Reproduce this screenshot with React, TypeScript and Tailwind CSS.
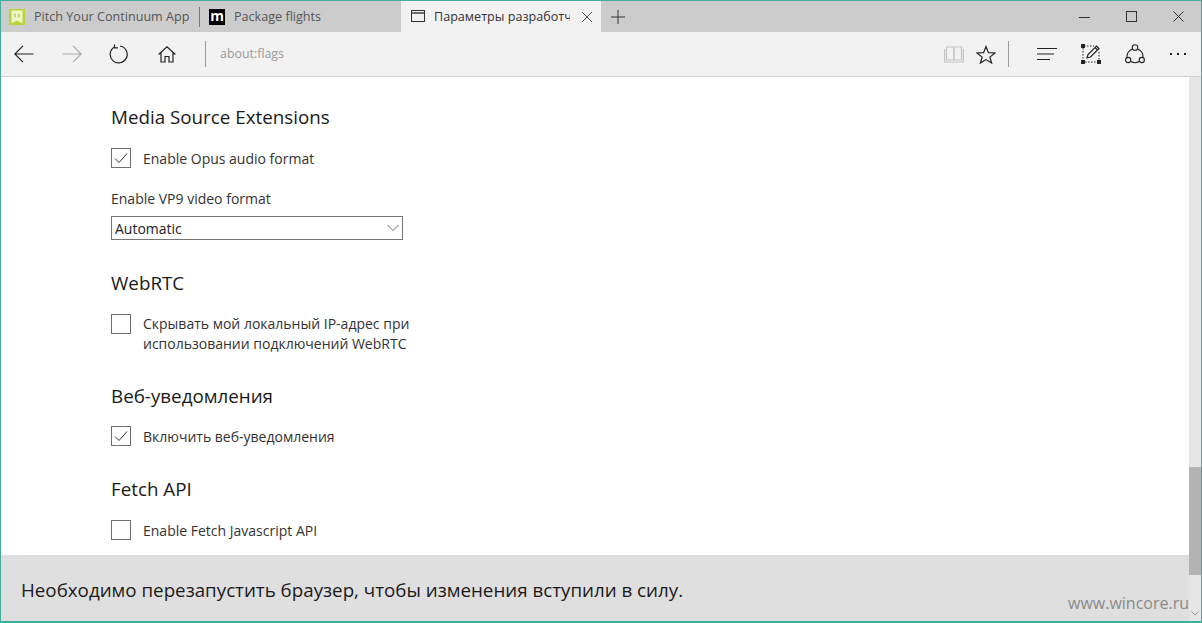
import React from 'react';

const font = { fontFamily: '"Open Sans", "Noto Sans", sans-serif' };

function Check({ checked }: { checked?: boolean }) {
  return (
    <span className="w-5 h-5 border border-[#6e6e6e] shrink-0 bg-white flex items-center justify-center">
      {checked && (
        <svg width="18" height="18" viewBox="0 0 18 18" fill="none" stroke="#333" strokeWidth="1">
          <path d="M3 9.5 L7 13.5 L15 4.5" />
        </svg>
      )}
    </span>
  );
}

function Heading({ children, className }: { children: React.ReactNode; className?: string }) {
  return <h2 className={`text-[18.8px] leading-[24px] text-[#1a1a1a] ${className}`}>{children}</h2>;
}

function Tab({ icon, label, w }: { icon: React.ReactNode; label: string; w: string }) {
  return (
    <div className={`h-full flex items-center pl-[8px] overflow-hidden ${w}`}>
      {icon}
      <span className="ml-[9px] mt-[2px] text-[12.6px] text-[#555] whitespace-nowrap">{label}</span>
    </div>
  );
}

function BackIcon({ color }: { color: string }) {
  return (
    <svg width="20" height="18" viewBox="0 0 20 18" fill="none" stroke={color} strokeWidth="1.2">
      <path d="M0.5 9 H19.5 M9 0.8 L0.8 9 L9 17.2" />
    </svg>
  );
}

export default function App() {
  return (
    <div style={font} className="w-[1202px] h-[623px] overflow-hidden border border-[#3fae9c] border-b-2 flex flex-col bg-white">
      {/* title bar */}
      <div className="h-[31px] bg-[#cccccc] flex items-stretch shrink-0">
        <Tab
          w="w-[191px]"
          label="Pitch Your Continuum App to"
          icon={
            <svg width="16" height="16" viewBox="0 0 16 16" className="shrink-0">
              <rect width="16" height="16" fill="#b9d533" />
              <path d="M2.5 1.5 H13.5 V14.5 L8 11.5 L2.5 14.5 Z" fill="#eef5c8" />
              <path d="M6.5 5 H6 V8 H6.5 M9.5 5 H10 V8 H9.5" stroke="#9ab82a" fill="none" />
            </svg>
          }
        />
        <div className="w-px h-[20px] mt-[6px] ml-[7px] bg-[#777] shrink-0" />
        <Tab
          w="w-[201px]"
          label="Package flights"
          icon={
            <span className="ml-px w-[16px] h-[16px] bg-black text-white text-[14px] leading-[14px] font-bold flex justify-center shrink-0">m</span>
          }
        />
        <div className="w-[200px] h-full bg-[#f2f2f2] flex items-center pl-[10px] shrink-0">
          <svg width="15" height="13" viewBox="0 0 15 13" fill="none" stroke="#333" className="shrink-0">
            <rect x="0.5" y="0.5" width="13" height="11" />
            <path d="M0.5 3 H13.5" strokeWidth="1.4" />
          </svg>
          <span className="ml-[8px] w-[136px] h-[18px] leading-[18px] text-[12.6px] text-[#333] whitespace-nowrap overflow-hidden shrink-0 block">Параметры разработчика</span>
          <svg width="12" height="12" viewBox="0 0 12 12" fill="none" stroke="#555" className="ml-[11px] shrink-0">
            <path d="M1 1 L11 11 M11 1 L1 11" />
          </svg>
        </div>
        <div className="ml-[10px] flex items-center">
          <svg width="14" height="14" viewBox="0 0 14 14" fill="none" stroke="#333">
            <path d="M7 0 V14 M0 7 H14" />
          </svg>
        </div>
        <div className="ml-auto flex items-center gap-[36px] pr-[17px]">
          <svg width="11" height="11" viewBox="0 0 11 11" fill="none" stroke="#333"><path d="M0 6.5 H11" /></svg>
          <svg width="11" height="11" viewBox="0 0 11 11" fill="none" stroke="#333"><rect x="0.5" y="0.5" width="10" height="10" /></svg>
          <svg width="11" height="11" viewBox="0 0 11 11" fill="none" stroke="#333"><path d="M0.5 0.5 L10.5 10.5 M10.5 0.5 L0.5 10.5" /></svg>
        </div>
      </div>

      {/* toolbar */}
      <div className="h-[45px] bg-[#f2f2f2] border-b border-[#cfcfcf] flex items-center shrink-0">
        <div className="ml-[13px]"><BackIcon color="#222" /></div>
        <div className="ml-[28px] scale-x-[-1]"><BackIcon color="#aaa" /></div>
        <svg width="20" height="20" viewBox="0 0 20 20" fill="none" stroke="#222" strokeWidth="1.2" className="ml-[26px]">
          <path d="M6.5 3 A8.5 8.5 0 1 0 12 2 M6.5 0.5 V3.8 H10" />
        </svg>
        <svg width="18" height="17" viewBox="0 0 18 17" fill="none" stroke="#222" strokeWidth="1.2" className="ml-[30px]">
          <path d="M0.6 8.5 L9 0.8 L17.4 8.5 M3 6.5 V16 H7 V10.5 H11 V16 H15 V6.5" />
        </svg>
        <div className="ml-[29px] w-px h-[26px] bg-[#9a9a9a]" />
        <span className="ml-[14px] text-[12.4px] text-[#999]">about:flags</span>

        <div className="ml-auto flex items-center">
          <svg width="20" height="17" viewBox="0 0 20 17" fill="none" stroke="#c4c4c4" strokeWidth="1.2">
            <path d="M2.5 1 H9.8 V14 H2.5 Z M10.2 1 H17.5 V14 H10.2 Z M0.6 3 V16 H19.4 V3" />
          </svg>
          <svg width="20" height="19" viewBox="0 0 20 19" fill="none" stroke="#222" strokeWidth="1.2" className="ml-[12px]">
            <path d="M10 1.5 L12.4 7.6 L19 8 L13.9 12.1 L15.6 18 L10 14.6 L4.4 18 L6.1 12.1 L1 8 L7.6 7.6 Z" />
          </svg>
          <div className="ml-[12px] w-px h-[26px] bg-[#9a9a9a]" />
          <svg width="20" height="14" viewBox="0 0 20 14" fill="none" stroke="#222" strokeWidth="1.2" className="ml-[28px]">
            <path d="M0 1.5 H20 M0 7 H17 M0 12.5 H13" />
          </svg>
          <svg width="20" height="20" viewBox="0 0 20 20" fill="none" stroke="#222" className="ml-[24px]">
            <path d="M3 2 H13 M2 4 V17 M4 18 H17 M18 8 V16" strokeDasharray="1.5 1.5" />
            <rect x="0.5" y="0.5" width="3" height="3" fill="#222" />
            <rect x="0.5" y="16.5" width="3" height="3" fill="#222" />
            <rect x="16.5" y="16.5" width="3" height="3" fill="#222" />
            <path d="M6 14 L7 10.5 L15.5 2 L18 4.5 L9.5 13 Z M14 3.5 L16.5 6" strokeWidth="1.2" />
          </svg>
          <svg width="20" height="20" viewBox="0 0 20 20" fill="none" stroke="#222" strokeWidth="1.1" className="ml-[24px]">
            <circle cx="10" cy="3.5" r="2.8" />
            <circle cx="3.2" cy="16" r="2.6" />
            <circle cx="16.8" cy="16" r="2.6" />
            <path d="M7.6 5 A8.5 8.5 0 0 0 2 13.5 M12.4 5 A8.5 8.5 0 0 1 18 13.5 M5.8 17.6 A9 9 0 0 0 14.2 17.6" />
          </svg>
          <div className="ml-[25px] mr-[15px] flex gap-[5px]">
            <span className="w-[2px] h-[2px] bg-[#222]" />
            <span className="w-[2px] h-[2px] bg-[#222]" />
            <span className="w-[2px] h-[2px] bg-[#222]" />
          </div>
        </div>
      </div>

      {/* page */}
      <div className="flex-1 flex min-h-0 relative">
        <div className="flex-1 flex flex-col min-w-0">
          <div className="flex-1 min-h-0 pl-[110px] pt-[28px] text-[14px] text-[#333] overflow-hidden">
            <Heading>Media Source Extensions</Heading>
            <label className="flex items-center mt-[19px] h-[20px]">
              <Check checked />
              <span className="ml-[12px]">Enable Opus audio format</span>
            </label>
            <div className="mt-[21px] leading-[20px]">Enable VP9 video format</div>
            <div className="mt-[7px] w-[292px] h-[24px] border border-[#767676] flex items-center justify-between pl-[3px] pr-[3px] text-[#222]">
              <span>Automatic</span>
              <svg width="12" height="8" viewBox="0 0 12 8" fill="none" stroke="#666"><path d="M0.5 1 L6 6.5 L11.5 1" /></svg>
            </div>

            <Heading className="mt-[31px]">WebRTC</Heading>
            <div className="flex mt-[19px]">
              <Check />
              <span className="ml-[12px] w-[290px] leading-[20px]">Скрывать мой локальный IP-адрес при использовании подключений WebRTC</span>
            </div>

            <Heading className="mt-[30px]">Веб-уведомления</Heading>
            <label className="flex items-center mt-[18px] h-[20px]">
              <Check checked />
              <span className="ml-[12px]">Включить веб-уведомления</span>
            </label>

            <Heading className="mt-[31px]">Fetch API</Heading>
            <label className="flex items-center mt-[19px] h-[20px]">
              <Check />
              <span className="ml-[12px]">Enable Fetch Javascript API</span>
            </label>
          </div>
          <div className="h-[66px] bg-[#dfdfdf] flex items-center pl-[20px] pt-[4px] text-[18.75px] text-[#1a1a1a] shrink-0">
            Необходимо перезапустить браузер, чтобы изменения вступили в силу.
          </div>
        </div>

        {/* scrollbar */}
        <div className="w-[12px] bg-[#e6e6e6] flex flex-col shrink-0">
          <div className="h-[390px] shrink-0" />
          <div className="h-[108px] bg-[#b3b3b3] shrink-0" />
          <div className="flex-1 flex items-end justify-center pb-[5px]">
            <svg width="8" height="5" viewBox="0 0 8 5" fill="none" stroke="#999"><path d="M0.5 0.5 L4 4 L7.5 0.5" /></svg>
          </div>
        </div>

        <span className="absolute right-[12px] bottom-[6px] text-[16px] text-[#8a8a8a]">www.wincore.ru</span>
      </div>
    </div>
  );
}
